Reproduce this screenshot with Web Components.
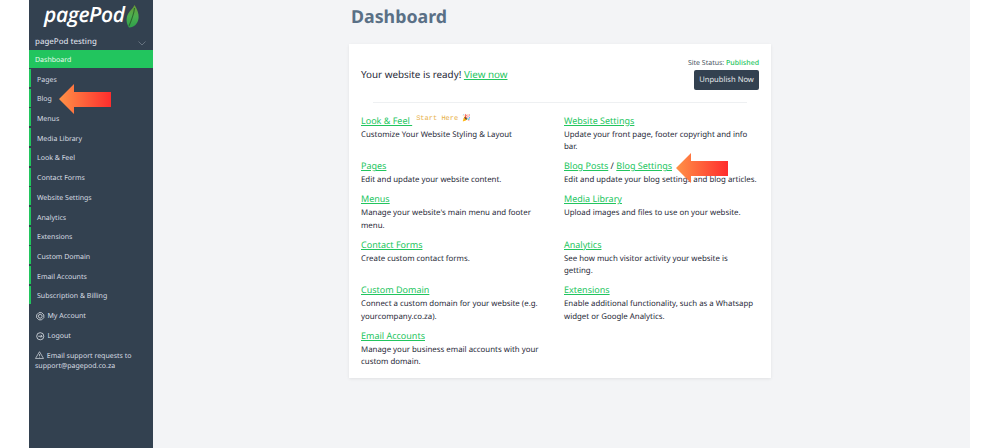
<!DOCTYPE html>
<html>
<head>
<meta charset="utf-8">
<title>pagePod Dashboard</title>
<style>
html, body { margin: 0; height: 100%; overflow: hidden; background: #fff; }
body { font-family: "Noto Sans", sans-serif; text-rendering: geometricPrecision; }
</style>
</head>
<body>
<pp-app>
    <pp-sidebar slot="side" site="pagePod testing">
        <pp-nav-item active>Dashboard</pp-nav-item>
        <pp-nav-item marked>Pages</pp-nav-item>
        <pp-nav-item marked>Blog</pp-nav-item>
        <pp-nav-item marked>Menus</pp-nav-item>
        <pp-nav-item marked>Media Library</pp-nav-item>
        <pp-nav-item marked>Look &amp; Feel</pp-nav-item>
        <pp-nav-item marked>Contact Forms</pp-nav-item>
        <pp-nav-item marked>Website Settings</pp-nav-item>
        <pp-nav-item marked>Analytics</pp-nav-item>
        <pp-nav-item marked>Extensions</pp-nav-item>
        <pp-nav-item marked>Custom Domain</pp-nav-item>
        <pp-nav-item marked>Email Accounts</pp-nav-item>
        <pp-nav-item marked>Subscription &amp; Billing</pp-nav-item>
        <pp-nav-item icon="gear">My Account</pp-nav-item>
        <pp-nav-item icon="logout">Logout</pp-nav-item>
        <pp-support>Email support requests to support@pagepod.co.za</pp-support>
    </pp-sidebar>
    <pp-dashboard>
        <pp-card>
            <pp-link-block>
                <a slot="title" href="#">Look &amp; Feel </a>
                <span slot="extra">Start Here 🎉</span>
                Customize Your Website Styling &amp; Layout
            </pp-link-block>
            <pp-link-block>
                <a slot="title" href="#">Website Settings</a>
                Update your front page, footer copyright and info bar.
            </pp-link-block>
            <pp-link-block>
                <a slot="title" href="#">Pages</a>
                Edit and update your website content.
            </pp-link-block>
            <pp-link-block>
                <a slot="title" href="#">Blog Posts</a>
                <span slot="title"> / </span>
                <a slot="title" href="#">Blog Settings</a>
                Edit and update your blog settings and blog articles.
            </pp-link-block>
            <pp-link-block>
                <a slot="title" href="#">Menus</a>
                Manage your website's main menu and footer menu.
            </pp-link-block>
            <pp-link-block>
                <a slot="title" href="#">Media Library</a>
                Upload images and files to use on your website.
            </pp-link-block>
            <pp-link-block>
                <a slot="title" href="#">Contact Forms</a>
                Create custom contact forms.
            </pp-link-block>
            <pp-link-block>
                <a slot="title" href="#">Analytics</a>
                See how much visitor activity your website is getting.
            </pp-link-block>
            <pp-link-block>
                <a slot="title" href="#">Custom Domain</a>
                Connect a custom domain for your website (e.g. yourcompany.co.za).
            </pp-link-block>
            <pp-link-block>
                <a slot="title" href="#">Extensions</a>
                Enable additional functionality, such as a Whatsapp widget or Google Analytics.
            </pp-link-block>
            <pp-link-block>
                <a slot="title" href="#">Email Accounts</a>
                Manage your business email accounts with your custom domain.
            </pp-link-block>
        </pp-card>
    </pp-dashboard>
    <pp-arrow style="left:59px;top:84px"></pp-arrow>
    <pp-arrow style="left:676px;top:153px"></pp-arrow>
</pp-app>

<script>
class PpApp extends HTMLElement {
    constructor() {
        super();
        this.attachShadow({ mode: "open" });
        this.shadowRoot.innerHTML = `
        <style>
            :host { display: block; position: relative; width: 1000px; height: 448px; overflow: hidden; background: #fff; }
            .frame { display: flex; height: 100%; padding: 0 30px 0 29px; box-sizing: border-box; }
            .rest { flex: 1; min-width: 0; background: #f3f4f6; }
        </style>
        <div class="frame">
            <slot name="side"></slot>
            <div class="rest"><slot></slot></div>
        </div>
        `;
    }
}

class PpSidebar extends HTMLElement {
    constructor() {
        super();
        this.attachShadow({ mode: "open" });
        this.shadowRoot.innerHTML = `
        <style>
            :host { display: block; width: 124px; height: 100%; flex: none; background: #334150; color: #d8dde3; box-sizing: border-box; }
            .logo { display: flex; align-items: center; height: 30px; gap: 1px; padding-left: 15px; }
            .word { font: italic 600 21px/30px "Open Sans", sans-serif; color: #fff; letter-spacing: -.4px; }
            .logo svg { margin-top: 3px; }
            .site { display: flex; justify-content: space-between; align-items: center; height: 20px; padding: 3px 7px 0 6px; box-sizing: border-box; font-size: 7.9px; font-weight: 500; }
            .site svg { width: 8px; height: 5px; margin-top: 3px; }
        </style>
        <div class="logo">
            <span class="word">pagePod</span>
            <svg width="13" height="23" viewBox="0 0 13 23">
                <defs><linearGradient id="leaf" x1="0" y1="0" x2="0" y2="1">
                    <stop offset="0" stop-color="#6b9a35"/><stop offset=".5" stop-color="#4caf50"/><stop offset="1" stop-color="#2fa04a"/>
                </linearGradient></defs>
                <path d="M8.5 0C11 4 13 8 12.6 13C12 19 7 23 3 22.5C0 18 0 13 2 9C4 5.5 7 3.5 8.5 0Z" fill="url(#leaf)"/>
                <path d="M8.5 3C8 8 6 14 3 21" stroke="#2b6a2f" stroke-width="1.1" fill="none"/>
            </svg>
        </div>
        <div class="site">
            <span>${this.getAttribute("site")}</span>
            <svg viewBox="0 0 8 5"><path d="M.5 .5L4 4L7.5 .5" fill="none" stroke="#66727f" stroke-width="1"/></svg>
        </div>
        <slot></slot>
        `;
    }
}

const NAV_ICONS = {
    gear: `<path d="M3.4 .8H6.6L9.2 3.4V6.6L6.6 9.2H3.4L.8 6.6V3.4Z"/><circle cx="5" cy="5" r="2.2"/>`,
    logout: `<circle cx="5" cy="5" r="4.2"/><path d="M2.6 5H7.2M5.6 3.4L7.2 5L5.6 6.6"/>`
};

class PpNavItem extends HTMLElement {
    constructor() {
        super();
        this.attachShadow({ mode: "open" });
        const icon = NAV_ICONS[this.getAttribute("icon")];
        this.shadowRoot.innerHTML = `
        <style>
            :host { display: block; height: 19.73px; box-sizing: border-box; font-size: 7px; }
            .row { display: flex; align-items: center; gap: 3px; height: 18px; padding: 4px 0 0 7px; box-sizing: border-box; }
            :host([marked]) .row { border-left: 2px solid #22c55e; padding: 4px 0 0 6px; }
            :host([active]) { height: 19px; }
            :host([active]) .row { background: #22c55e; color: #eafaf0; padding: 2px 0 0 6px; }
            svg { width: 8.5px; height: 8.5px; fill: none; stroke: currentColor; stroke-width: 1; flex: none; }
        </style>
        <div class="row">
            ${icon ? `<svg viewBox="0 0 10 10">${icon}</svg>` : ""}
            <span><slot></slot></span>
        </div>
        `;
    }
}

class PpSupport extends HTMLElement {
    constructor() {
        super();
        this.attachShadow({ mode: "open" });
        this.shadowRoot.innerHTML = `
        <style>
            :host { display: block; padding: 6px 6px 0; font-size: 7px; line-height: 10px; }
            svg { width: 9px; height: 8px; fill: none; stroke: currentColor; stroke-width: .8; vertical-align: -1px; margin-right: 1px; }
        </style>
        <svg viewBox="0 0 10 9"><path d="M5 .8L9.5 8.4H.5Z"/><path d="M5 3.4V5.8M5 6.6V7.3"/></svg>
        <slot></slot>
        `;
    }
}

class PpDashboard extends HTMLElement {
    constructor() {
        super();
        this.attachShadow({ mode: "open" });
        this.shadowRoot.innerHTML = `
        <style>
            :host { display: block; padding: 0 0 0 196px; }
            h1 { margin: 0 0 0 2px; height: 44px; padding-top: 5px; box-sizing: border-box; font-size: 17.8px; line-height: 24px; font-weight: 700; color: #5a7086; }
        </style>
        <h1>Dashboard</h1>
        <slot></slot>
        `;
    }
}

class PpCard extends HTMLElement {
    constructor() {
        super();
        this.attachShadow({ mode: "open" });
        this.shadowRoot.innerHTML = `
        <style>
            :host { display: block; width: 422px; height: 334px; padding: 12px 12px 0; box-sizing: border-box; background: #fff; box-shadow: 0 1px 3px rgba(0,0,0,.08); }
            .top { display: flex; justify-content: space-between; align-items: center; height: 36px; }
            .ready { font-size: 9.83px; color: #1f2937; padding-bottom: 1px; }
            .ready a { color: #22c55e; }
            .pub { align-self: flex-start; padding-top: 3px; display: flex; flex-direction: column; align-items: flex-end; gap: 1px; font-size: 7px; line-height: 10px; color: #4b5563; }
            .pub b { font-weight: 500; color: #22c55e; }
            button { border: 0; border-radius: 2px; background: #334150; color: #e3e7eb; font: 7.6px "Noto Sans", sans-serif; height: 20px; padding: 0; width: 65px; white-space: nowrap; text-rendering: geometricPrecision; }
            hr { margin: 10px 12px 12px; border: 0; border-top: 1px solid #eef0f2; }
            .grid { display: grid; grid-template-columns: 191px 194px; column-gap: 12px; }
        </style>
        <div class="top">
            <div class="ready">Your website is ready! <a href="#">View now</a></div>
            <div class="pub">
                <div>Site Status: <b>Published</b></div>
                <button>Unpublish Now</button>
            </div>
        </div>
        <hr>
        <div class="grid"><slot></slot></div>
        `;
    }
}

class PpLinkBlock extends HTMLElement {
    constructor() {
        super();
        this.attachShadow({ mode: "open" });
        this.shadowRoot.innerHTML = `
        <style>
            :host { display: block; padding-bottom: 6.8px; font-size: 7.87px; line-height: 12.3px; color: #1f2937; }
            .head { display: flex; align-items: flex-start; height: 14px; font-size: 9px; line-height: 12px; white-space: pre; }
            .extra { font: 7px/9px "Liberation Mono", monospace; color: #e8b04a; margin-left: 4px; margin-top: 0; }
            ::slotted(a) { color: #22c55e; }
        </style>
        <div class="head"><span><slot name="title"></slot></span><span class="extra"><slot name="extra"></slot></span></div>
        <slot></slot>
        `;
    }
}

class PpArrow extends HTMLElement {
    constructor() {
        super();
        this.attachShadow({ mode: "open" });
        this.shadowRoot.innerHTML = `
        <style>
            :host { display: block; position: absolute; width: 52px; height: 30px; }
            svg { display: block; }
        </style>
        <svg width="52" height="30" viewBox="0 0 52 30">
            <defs><linearGradient id="g" x1="0" y1="0" x2="1" y2="0">
                <stop offset="0" stop-color="#ff9247"/><stop offset="1" stop-color="#ff2d2d"/>
            </linearGradient></defs>
            <path d="M0 15L15 0V8H52V23H15V30Z" fill="url(#g)"/>
        </svg>
        `;
    }
}

customElements.define("pp-app", PpApp);
customElements.define("pp-sidebar", PpSidebar);
customElements.define("pp-nav-item", PpNavItem);
customElements.define("pp-support", PpSupport);
customElements.define("pp-dashboard", PpDashboard);
customElements.define("pp-card", PpCard);
customElements.define("pp-link-block", PpLinkBlock);
customElements.define("pp-arrow", PpArrow);
</script>
</body>
</html>
